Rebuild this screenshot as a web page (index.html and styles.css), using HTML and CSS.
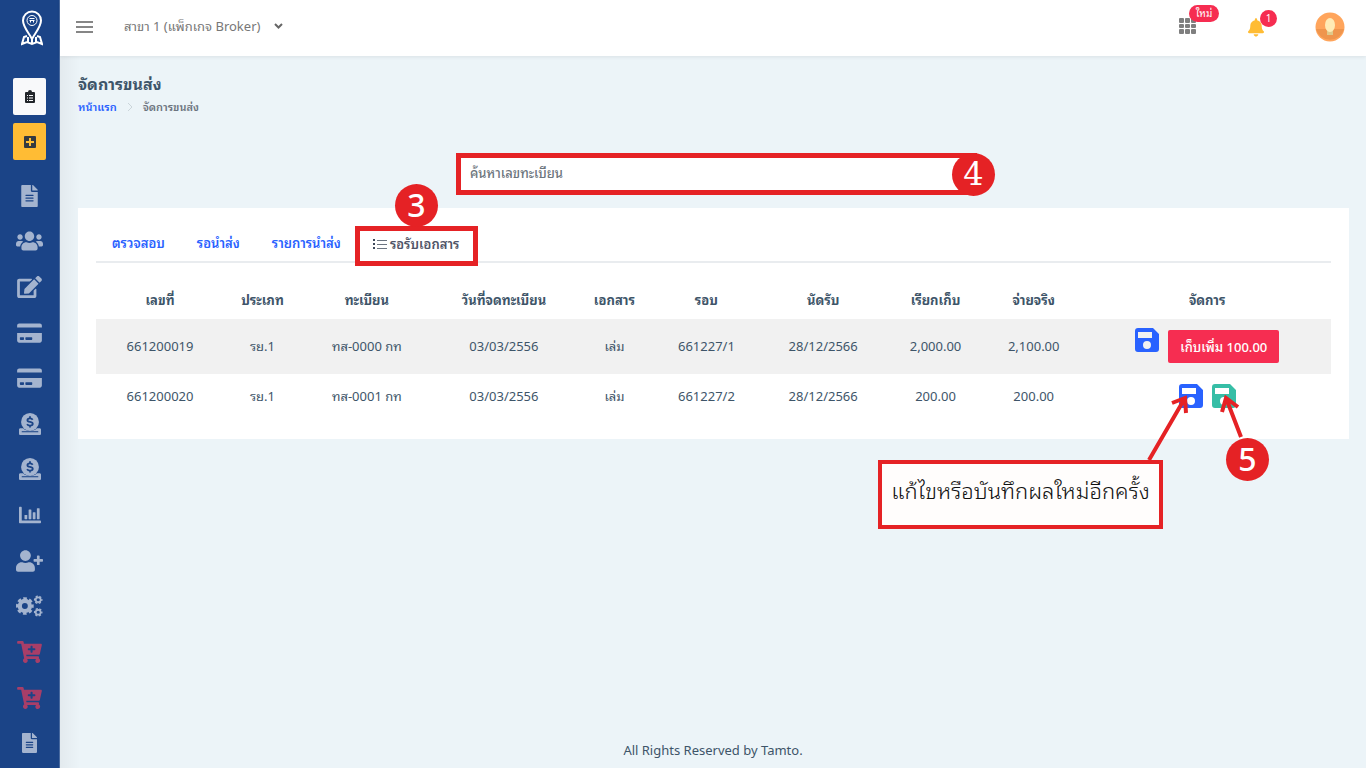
FILE: index.html
```html
<!DOCTYPE html>
<html lang="th">
<head>
<meta charset="utf-8">
<meta name="viewport" content="width=device-width, initial-scale=1">
<title>จัดการขนส่ง</title>
<link rel="stylesheet" href="styles.css">
</head>
<body>
<svg width="0" height="0" class="sprite" aria-hidden="true">
  <symbol id="file" viewBox="0 0 384 512"><path d="M224 136V0H24C10.700 0 0 10.700 0 24v464c0 13.300 10.700 24 24 24h336c13.300 0 24-10.700 24-24V160H248c-13.200 0-24-10.800-24-24zm64 236c0 6.600-5.400 12-12 12H108c-6.600 0-12-5.400-12-12v-8c0-6.600 5.400-12 12-12h168c6.600 0 12 5.400 12 12v8zm0-64c0 6.600-5.400 12-12 12H108c-6.600 0-12-5.400-12-12v-8c0-6.600 5.400-12 12-12h168c6.600 0 12 5.400 12 12v8zm0-72v8c0 6.600-5.400 12-12 12H108c-6.600 0-12-5.400-12-12v-8c0-6.600 5.400-12 12-12h168c6.600 0 12 5.400 12 12zm96-114.100v6.100H256V0h6.100c6.400 0 12.500 2.500 17 7l97.900 98c4.500 4.500 7 10.600 7 16.900z"/></symbol>
  <symbol id="users" viewBox="0 0 640 512"><path d="M96 224c35.300 0 64-28.700 64-64s-28.700-64-64-64-64 28.700-64 64 28.700 64 64 64zm448 0c35.300 0 64-28.700 64-64s-28.700-64-64-64-64 28.700-64 64 28.700 64 64 64zm32 32h-64c-17.600 0-33.500 7.100-45.100 18.600 40.300 22.100 68.900 62 75.100 109.400h66c17.700 0 32-14.300 32-32v-32c0-35.300-28.700-64-64-64zm-256 0c61.900 0 112-50.100 112-112S381.900 32 320 32 208 82.100 208 144s50.100 112 112 112zm76.800 32h-8.300c-20.800 10-43.900 16-68.500 16s-47.600-6-68.500-16h-8.300C179.600 288 128 339.600 128 403.200V432c0 26.500 21.500 48 48 48h288c26.500 0 48-21.500 48-48v-28.800c0-63.600-51.600-115.200-115.200-115.200zm-223.700-13.400C161.500 263.100 145.600 256 128 256H64c-35.300 0-64 28.700-64 64v32c0 17.700 14.300 32 32 32h65.900c6.300-47.400 34.900-87.300 75.200-109.400z"/></symbol>
  <symbol id="edit" viewBox="0 0 576 512"><path d="M402.600 83.200l90.200 90.200c3.800 3.800 3.800 10 0 13.800L274.400 405.600l-92.800 10.300c-12.400 1.400-22.900-9.100-21.500-21.500l10.300-92.800L388.800 83.200c3.800-3.800 10-3.800 13.800 0zm162-22.900l-48.800-48.800c-15.200-15.200-39.900-15.200-55.200 0l-35.400 35.400c-3.800 3.800-3.800 10 0 13.800l90.200 90.200c3.800 3.800 10 3.800 13.800 0l35.400-35.400c15.200-15.300 15.200-40 0-55.200zM384 346.200V448H64V128h229.800c3.200 0 6.200-1.300 8.500-3.500l40-40c7.600-7.600 2.200-20.500-8.500-20.500H48C21.500 64 0 85.500 0 112v352c0 26.500 21.500 48 48 48h352c26.500 0 48-21.500 48-48V306.200c0-10.700-12.900-16-20.500-8.500l-40 40c-2.200 2.300-3.500 5.300-3.500 8.500z"/></symbol>
  <symbol id="card" viewBox="0 0 576 512"><path d="M0 432c0 26.500 21.500 48 48 48h480c26.500 0 48-21.500 48-48V256H0v176zm192-68c0-6.600 5.400-12 12-12h136c6.600 0 12 5.400 12 12v40c0 6.600-5.400 12-12 12H204c-6.600 0-12-5.400-12-12v-40zm-128 0c0-6.600 5.400-12 12-12h72c6.600 0 12 5.400 12 12v40c0 6.600-5.400 12-12 12H76c-6.600 0-12-5.400-12-12v-40zM576 80v48H0V80c0-26.500 21.500-48 48-48h480c26.500 0 48 21.500 48 48z"/></symbol>
  <symbol id="donate" viewBox="0 0 512 512"><path d="M32 352h62c42 42 98 64 162 64s120-22 162-64h62c18 0 32 14 32 32v96c0 18-14 32-32 32H32c-18 0-32-14-32-32v-96c0-18 14-32 32-32z"/><circle cx="256" cy="208" r="208"/><rect x="64" y="424" width="384" height="24" class="knock"/><path d="M318 156c-14-24-36-32-62-32-36 0-60 18-60 42 0 58 124 28 124 84 0 28-26 44-64 44-30 0-54-10-68-36M256 76v48M256 292v48" class="knock-line"/></symbol>
  <symbol id="chart" viewBox="0 0 512 512"><path d="M24 64h16c14 0 24 10 24 24v296h424c14 0 24 10 24 24v16c0 14-10 24-24 24H24c-14 0-24-10-24-24V88c0-14 10-24 24-24z"/><rect x="128" y="256" width="64" height="96" rx="12"/><rect x="224" y="128" width="64" height="224" rx="12"/><rect x="320" y="192" width="64" height="160" rx="12"/><rect x="416" y="96" width="64" height="256" rx="12"/></symbol>
  <symbol id="userplus" viewBox="0 0 640 512"><path d="M624 208h-64v-64c0-8.800-7.200-16-16-16h-32c-8.800 0-16 7.200-16 16v64h-64c-8.800 0-16 7.200-16 16v32c0 8.800 7.200 16 16 16h64v64c0 8.800 7.200 16 16 16h32c8.800 0 16-7.200 16-16v-64h64c8.800 0 16-7.200 16-16v-32c0-8.800-7.200-16-16-16zm-400 48c70.700 0 128-57.300 128-128S294.700 0 224 0 96 57.300 96 128s57.300 128 128 128zm89.600 32h-16.700c-22.200 10.200-46.900 16-72.900 16s-50.600-5.800-72.900-16h-16.700C60.200 288 0 348.200 0 422.400V464c0 26.500 21.500 48 48 48h352c26.500 0 48-21.500 48-48v-41.600c0-74.200-60.200-134.400-134.400-134.400z"/></symbol>
  <symbol id="cogs" viewBox="0 0 640 512"><g fill="none" stroke="currentColor"><circle cx="210" cy="256" r="120" stroke-width="100"/><circle cx="210" cy="256" r="180" stroke-width="60" pathLength="80" stroke-dasharray="6 4" stroke-dashoffset="3"/><circle cx="526" cy="108" r="58" stroke-width="40"/><circle cx="526" cy="108" r="86" stroke-width="32" pathLength="60" stroke-dasharray="6 4" stroke-dashoffset="3"/><circle cx="526" cy="404" r="58" stroke-width="40"/><circle cx="526" cy="404" r="86" stroke-width="32" pathLength="60" stroke-dasharray="6 4" stroke-dashoffset="3"/></g></symbol>
  <symbol id="cart" viewBox="0 0 576 512"><path d="M504.700 320H211.600l6.500 32h268.400c15.400 0 26.800 14.300 23.400 29.300l-5.500 24.300C523.100 414.700 536 433.800 536 456c0 31.200-25.500 56.400-56.800 56-29.800-.4-54.400-24.600-55.200-54.400-.4-16.300 6.100-31 16.800-41.600H231.200C241.600 426.200 248 440.300 248 456c0 31.800-26.500 57.400-58.700 55.900-28.500-1.300-51.800-24.400-53.200-52.900-1.200-22 10.400-41.500 28-51.600L93.900 64H24C10.700 64 0 53.300 0 40V24C0 10.700 10.700 0 24 0h102.500c11.400 0 21.200 8 23.500 19.200L159.200 64H552c15.400 0 26.800 14.300 23.400 29.300l-47.300 208C525.600 312.200 515.900 320 504.700 320zM408 168h-48v-40c0-8.800-7.200-16-16-16h-16c-8.800 0-16 7.200-16 16v40h-48c-8.800 0-16 7.200-16 16v16c0 8.800 7.200 16 16 16h48v40c0 8.800 7.200 16 16 16h16c8.800 0 16-7.200 16-16v-40h48c8.800 0 16-7.200 16-16v-16c0-8.800-7.200-16-16-16z"/></symbol>
  <symbol id="bell" viewBox="0 0 448 512"><path d="M224 512c35.300 0 64-28.600 64-64H160c0 35.400 28.700 64 64 64zm215.400-149.700c-19.300-20.800-55.500-52-55.500-154.300 0-77.700-54.500-139.900-127.900-155.200V32c0-17.700-14.300-32-32-32s-32 14.300-32 32v20.800C118.600 68.100 64.100 130.300 64.100 208c0 102.300-36.200 133.500-55.500 154.300-6 6.400-8.700 14.200-8.600 21.700.1 16.400 13 32 32.100 32h383.800c19.100 0 32-15.600 32.100-32 0-7.500-2.600-15.300-8.600-21.700z"/></symbol>
  <symbol id="save" viewBox="0 0 24 24"><path fill-rule="evenodd" d="M3 0h15l6 6v15a3 3 0 0 1-3 3H3a3 3 0 0 1-3-3V3a3 3 0 0 1 3-3zM3 4v6h14V4zM12 13a4 4 0 1 0 0 8 4 4 0 0 0 0-8z"/></symbol>
</svg>

<div class="app">
  <aside class="sidebar">
    <a href="#" class="logo" aria-label="Tamto">
      <svg viewBox="0 0 22 36" width="22" height="36" fill="none" stroke="#fff"><path d="M11 29C8 23 2 17 2 10.500a9 9 0 0 1 18 0C20 17 14 23 11 29z" stroke-width="2"/><circle cx="11" cy="10.500" r="5"/><path d="M8.500 8.500h5M8.500 10.500h5M9.500 12.500v-2M12.500 12.500v-2" stroke-width="1"/><path d="M6 26l-3 1-2 7 5-2 5 2 5-2 5 2-2-7-3-1M7 27v5M15 27v5M11 29v4" stroke-width="2"/></svg>
    </a>
    <div class="quick">
      <button class="quick-btn light" aria-label="รายการ"><svg viewBox="0 0 10 13" width="10" height="13"><path fill="#212529" fill-rule="evenodd" d="M1 2h2a2 2 0 0 1 4 0h2a1 1 0 0 1 1 1v9a1 1 0 0 1-1 1H1a1 1 0 0 1-1-1V3a1 1 0 0 1 1-1zM2 5v1h1V5zm2 0v1h4V5zM2 7.500v1h1v-1zm2 0v1h4v-1zM2 10v1h1v-1zm2 0v1h4v-1z"/></svg></button>
      <button class="quick-btn amber" aria-label="เพิ่ม"><svg viewBox="0 0 12 12" width="12" height="12"><rect width="12" height="12" rx="1" fill="#343a40"/><path d="M6 2v8M2 6h8" stroke="#ffbe33" stroke-width="2"/></svg></button>
    </div>
    <nav class="menu">
      <a href="#" aria-label="เอกสาร"><svg width="17" height="22"><use href="#file"/></svg></a>
      <a href="#" aria-label="ลูกค้า"><svg width="27" height="22"><use href="#users"/></svg></a>
      <a href="#" aria-label="แก้ไข"><svg width="25" height="22"><use href="#edit"/></svg></a>
      <a href="#" aria-label="ชำระเงิน"><svg width="25" height="22"><use href="#card"/></svg></a>
      <a href="#" aria-label="บัตร"><svg width="25" height="22"><use href="#card"/></svg></a>
      <a href="#" aria-label="รายรับ"><svg width="22" height="22"><use href="#donate"/></svg></a>
      <a href="#" aria-label="รายจ่าย"><svg width="22" height="22"><use href="#donate"/></svg></a>
      <a href="#" aria-label="รายงาน"><svg width="22" height="22"><use href="#chart"/></svg></a>
      <a href="#" aria-label="เพิ่มผู้ใช้"><svg width="27" height="22"><use href="#userplus"/></svg></a>
      <a href="#" aria-label="ตั้งค่า"><svg width="27" height="22"><use href="#cogs"/></svg></a>
      <a href="#" class="shop" aria-label="สั่งซื้อ"><svg width="25" height="22"><use href="#cart"/></svg></a>
      <a href="#" class="shop" aria-label="ร้านค้า"><svg width="25" height="22"><use href="#cart"/></svg></a>
      <a href="#" aria-label="คู่มือ"><svg width="17" height="20"><use href="#file"/></svg></a>
    </nav>
  </aside>

  <div class="page">
    <header class="topbar">
      <button class="icon-btn" aria-label="เมนู"><svg width="17" height="12" viewBox="0 0 17 12"><path d="M0 1h17M0 6h17M0 11h17" stroke="#868686" stroke-width="2"/></svg></button>
      <button class="branch">สาขา 1 (แพ็กเกจ Broker)<svg width="9" height="6" viewBox="0 0 9 6" fill="none"><path d="M1 1l3.500 3.500L8 1" stroke="#666" stroke-width="2"/></svg></button>
      <div class="tools">
        <button class="icon-btn apps" aria-label="แอป"><svg width="18" height="16" viewBox="0 0 18 16" fill="#7f7f7f"><rect width="5" height="5" rx="1"/><rect x="6" width="5" height="5" rx="1"/><rect x="12" width="5" height="5" rx="1"/><rect y="6" width="5" height="4" rx="1"/><rect x="6" y="6" width="5" height="4" rx="1"/><rect x="12" y="6" width="5" height="4" rx="1"/><rect y="11" width="5" height="5" rx="1"/><rect x="6" y="11" width="5" height="5" rx="1"/><rect x="12" y="11" width="5" height="5" rx="1"/></svg><span class="badge wide">ใหม่</span></button>
        <button class="icon-btn bell" aria-label="แจ้งเตือน"><svg width="16" height="19"><use href="#bell"/></svg><span class="badge">1</span></button>
        <button class="icon-btn" aria-label="บัญชี"><svg width="30" height="30" viewBox="0 0 30 30"><circle cx="15" cy="15" r="14.500" fill="#ffa55c"/><path d="M1 17h28a14.500 14.500 0 0 1-28 0z" fill="#ef954d"/><path d="M12 18h6v5h-6z" fill="#dfc98a"/><ellipse cx="15" cy="13" rx="5" ry="7" fill="#ffebb5"/></svg></button>
      </div>
    </header>

    <main class="content">
      <h1>จัดการขนส่ง</h1>
      <nav class="crumbs"><a href="#">หน้าแรก</a><svg width="6" height="10" viewBox="0 0 6 10" fill="none"><path d="M1 1l4 4-4 4" stroke="#cbd5da"/></svg><span>จัดการขนส่ง</span></nav>

      <form class="search">
        <input type="text" placeholder="ค้นหาเลขทะเบียน" aria-label="ค้นหาเลขทะเบียน">
        <span class="step step-four">4</span>
      </form>

      <section class="panel">
        <div class="tabs">
          <button>ตรวจสอบ</button>
          <button>รอนำส่ง</button>
          <button>รายการนำส่ง</button>
          <button class="active"><svg width="14" height="10" viewBox="0 0 14 10"><path d="M0 1h2M0 5h2M0 9h2" stroke="#3e4a5c" stroke-width="2"/><path d="M4 1.500h10M4 5.500h10M4 9.500h10" stroke="#6b7480"/></svg>รอรับเอกสาร<span class="step step-three">3</span></button>
        </div>
        <table>
          <colgroup><col class="c-no"><col class="c-type"><col class="c-plate"><col class="c-reg"><col class="c-doc"><col class="c-round"><col class="c-due"><col class="c-bill"><col class="c-paid"><col></colgroup>
          <thead><tr><th>เลขที่</th><th>ประเภท</th><th>ทะเบียน</th><th>วันที่จดทะเบียน</th><th>เอกสาร</th><th>รอบ</th><th>นัดรับ</th><th>เรียกเก็บ</th><th>จ่ายจริง</th><th>จัดการ</th></tr></thead>
          <tbody>
            <tr class="odd"><td>661200019</td><td>รย.1</td><td>ทส-0000 กท</td><td>03/03/2556</td><td>เล่ม</td><td>661227/1</td><td>28/12/2566</td><td>2,000.00</td><td>2,100.00</td><td><div class="actions"><button class="save" aria-label="บันทึก"><svg width="24" height="24"><use href="#save"/></svg></button><button class="collect">เก็บเพิ่ม 100.00</button></div></td></tr>
            <tr><td>661200020</td><td>รย.1</td><td>ทส-0001 กท</td><td>03/03/2556</td><td>เล่ม</td><td>661227/2</td><td>28/12/2566</td><td>200.00</td><td>200.00</td><td><div class="actions"><button class="save" aria-label="แก้ไข"><svg width="24" height="24"><use href="#save"/></svg></button><button class="save green" aria-label="บันทึก"><svg width="24" height="24"><use href="#save"/></svg></button></div></td></tr>
          </tbody>
        </table>
        <svg class="arrows" width="110" height="66" viewBox="0 0 110 66" fill="none" stroke="#e52225" stroke-width="4"><path d="M9 65L45 3M32 8l13-5 1 15M101 42L86 3M82 17l4-14 12 9"/></svg>
        <span class="step step-five">5</span>
        <p class="callout">แก้ไขหรือบันทึกผลใหม่อีกครั้ง</p>
      </section>
    </main>
    <footer>All Rights Reserved by Tamto.</footer>
  </div>
</div>
</body>
</html>
```
FILE: styles.css
```css
* { box-sizing: border-box; }
body {
  margin: 0;
  background: #ecf4f8;
  color: #3e5569;
  font: 13px/20px "Noto Sans", "Noto Sans Thai Looped", Loma, "Noto Sans Thai", sans-serif;
}
button { border: 0; padding: 0; background: none; font: inherit; color: inherit; cursor: pointer; }
a { color: #2962ff; text-decoration: none; }
svg { display: block; flex: none; }
.sprite { position: absolute; }
.app { display: flex; min-height: 100vh; }

.sidebar {
  width: 60px;
  flex: none;
  display: flex;
  flex-direction: column;
  background: #1b4487;
  border-right: 1px solid #4a6ba0;
  padding-bottom: 2px;
}
.logo { display: flex; justify-content: center; padding: 10px 0 0 4px; height: 78px; }
.quick { display: flex; flex-direction: column; align-items: center; gap: 8px; padding-bottom: 13px; }
.quick-btn {
  width: 33px;
  height: 37px;
  border-radius: 2px;
  display: flex;
  align-items: center;
  justify-content: center;
}
.light { background: #f8f9fa; }
.amber { background: #ffbc34; }
.menu { flex: 1; display: flex; flex-direction: column; }
.menu a {
  flex: 1;
  min-height: 32px;
  display: flex;
  align-items: center;
  justify-content: center;
  color: #a4b4cf;
}
.menu .shop { color: #a83e68; }
.menu svg, .bell svg, .save svg { fill: currentColor; }
.knock { fill: #1b4487; }
.knock-line { fill: none; stroke: #1b4487; stroke-width: 42; }

.page {
  flex: 1;
  min-width: 0;
  display: flex;
  flex-direction: column;
  background: linear-gradient(to right, #e3eaee, #ecf4f8 20px);
}
.topbar {
  height: 56px;
  display: flex;
  align-items: center;
  padding: 0 21px 2px 16px;
  background: #fff;
  box-shadow: 0 1px 4px rgba(0, 0, 0, .08);
}
.icon-btn { position: relative; }
.branch { display: flex; align-items: center; gap: 14px; margin-left: 31px; padding-bottom: 2px; color: #777; }
.tools { margin-left: auto; display: flex; align-items: center; gap: 51px; }
.apps { padding-bottom: 2px; }
.bell { color: #ffbc34; }
.badge {
  position: absolute;
  left: 12px;
  bottom: 10px;
  min-width: 17px;
  height: 17px;
  border-radius: 9px;
  background: #f62d51;
  color: #fff;
  font-size: 10px;
  line-height: 17px;
}
.badge.wide { left: 10px; bottom: 14px; width: 30px; }

.content { flex: 1; padding: 17px 17px 20px 18px; }
h1 { margin: 0; font-size: 16px; line-height: 22px; }
.crumbs { display: flex; align-items: center; gap: 10px; font-size: 11px; font-weight: 600; line-height: 24px; }
.crumbs span { color: #6c7580; }
.search { position: relative; width: 41%; margin: 34px auto 0; left: 3px; }
.search input {
  width: 100%;
  height: 42px;
  border: 5px solid #e52225;
  padding: 0 9px 2px;
  background: #fff;
  font: inherit;
  font-weight: 500;
  color: #555;
}
.search input::placeholder { color: #6c757d; opacity: 1; }
.step {
  position: absolute;
  width: 43px;
  height: 43px;
  border-radius: 50%;
  background: #e52225;
  color: #fff;
  font: 500 32px/42px "Noto Sans", sans-serif;
  text-align: center;
}
.step-four { right: -18px; top: 0; font-family: "DejaVu Serif", serif; }
.step-three { left: 35px; top: -47px; }
.step-five { right: 80px; top: 230px; }

.panel { position: relative; margin-top: 13px; padding: 18px 18px 20px; background: #fff; }
.tabs { display: flex; height: 37px; border-bottom: 2px solid #e9ecef; color: #2962ff; font-weight: 600; }
.tabs button { padding: 0 16px 2px; height: 36px; }
.tabs .active {
  position: relative;
  display: flex;
  align-items: center;
  gap: 3px;
  height: 40px;
  margin-left: -2px;
  border: 5px solid #e52225;
  padding: 0 14px 4px 13px;
  color: #4f5467;
}
table { width: 100%; table-layout: fixed; border-collapse: collapse; margin-top: 18px; text-align: center; }
th { height: 38px; padding: 0 0 0 2px; font-weight: 700; }
td { height: 45px; padding: 0 0 2px 2px; }
.odd td { height: 55px; background: #f1f1f1; }
.c-no, .c-due { width: 10.2%; }
.c-type { width: 6.4%; }
.c-plate { width: 10.5%; }
.c-reg { width: 11.7%; }
.c-doc { width: 6.2%; }
.c-round { width: 8.7%; }
.c-bill { width: 8%; }
.c-paid { width: 7.9%; }
.actions { display: flex; align-items: flex-start; justify-content: center; gap: 9px; }
.save { color: #2962ff; }
.save.green { color: #36bea6; }
.collect { height: 33px; margin-top: 2px; padding: 0 12px; border-radius: 2px; background: #f62d51; color: #fff; font-weight: 500; }
.arrows { position: absolute; right: 99px; top: 187px; }
.callout {
  position: absolute;
  right: 186px;
  top: 252px;
  margin: 0;
  width: 285px;
  height: 69px;
  border: 4px solid #e52225;
  background: #fffdfc;
  color: #111;
  font-size: 22px;
  font-weight: 300;
  line-height: 52px;
  text-align: center;
  white-space: nowrap;
}
footer { padding: 0 0 8px; text-align: center; }
```
